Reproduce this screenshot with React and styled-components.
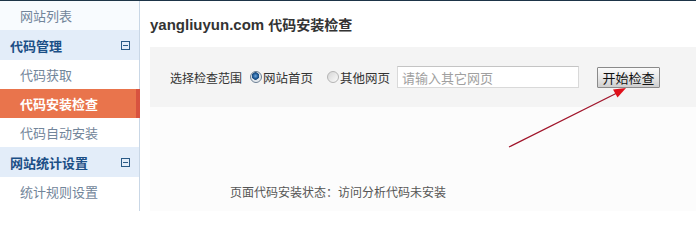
import React from "react";
import styled, { createGlobalStyle } from "styled-components";

const GlobalStyle = createGlobalStyle`
  html, body { margin: 0; padding: 0; background: #fff; }
  body { font-family: "Noto Sans CJK SC", "Liberation Sans", sans-serif; }
`;

const MENU = [
  { type: "item", label: "网站列表", first: true },
  { type: "head", label: "代码管理" },
  { type: "item", label: "代码获取" },
  { type: "item", label: "代码安装检查", active: true },
  { type: "item", label: "代码自动安装" },
  { type: "head", label: "网站统计设置" },
  { type: "item", label: "统计规则设置" },
];

const Page = styled.div`
  position: relative;
  width: 696px;
  height: 211px;
  overflow: hidden;
  border-top: 1px solid #1d3447;
  box-sizing: border-box;
  display: flex;
`;

const Sidebar = styled.div`
  width: 139px;
  flex-shrink: 0;
  border-right: 1px solid #c9d7e6;
  background: #fff;
  display: flex;
  flex-direction: column;
`;

const MenuItem = styled.div`
  height: 29px;
  display: flex;
  align-items: center;
  padding-left: 20px;
  font-size: 13px;
  font-weight: ${p => (p.active ? 700 : 400)};
  color: ${p => (p.active ? "#fff" : "#72859a")};
  background: ${p => (p.active ? "#e9744c" : p.first ? "#f8fbfe" : "#fff")};
  border-right: ${p => (p.active ? "4px solid #d8523f" : "none")};
  margin-right: ${p => (p.active ? "-1px" : "0")};
`;

const MenuHead = styled.div`
  height: 30px;
  display: flex;
  align-items: center;
  justify-content: space-between;
  padding: 0 9px 0 10px;
  font-size: 13px;
  font-weight: 700;
  color: #1b4f86;
  background: #e3edf9;
`;

const Collapse = styled.span`
  width: 7px;
  height: 7px;
  border: 1px solid #2a5a86;
  position: relative;
  &::after {
    content: "";
    position: absolute;
    left: 1px;
    right: 1px;
    top: 3px;
    height: 1px;
    background: #2a5a86;
  }
`;

const Main = styled.div`
  flex: 1;
  padding-left: 10px;
  display: flex;
  flex-direction: column;
`;

const Title = styled.div`
  height: 46px;
  display: flex;
  align-items: center;
  font-size: 14px;
  font-weight: 700;
  color: #333;
`;

const Domain = styled.span`
  font-family: "Liberation Sans", Arial, sans-serif;
  font-size: 15px;
  margin-right: 4px;
`;

const Panel = styled.div`
  height: 60px;
  background: #f4f4f4;
  display: flex;
  align-items: center;
  padding-left: 20px;
  font-size: 12px;
  color: #333;
`;

const Label = styled.span`
  margin-right: 8px;
`;

const RadioLabel = styled.label`
  display: flex;
  align-items: center;
  margin-right: ${p => p.gap}px;
  font-size: 12.5px;
`;

const RadioDot = styled.span`
  width: 10px;
  height: 10px;
  border-radius: 50%;
  border: 1px solid ${p => (p.checked ? "#6b7f93" : "#b4b4b4")};
  background: ${p =>
    p.checked
      ? "radial-gradient(circle at 45% 40%, #6fa6dc 0, #1f5a96 2.5px, #1f4f80 3.5px, #dfe4ea 4px, #f4f6f8 100%)"
      : "linear-gradient(135deg, #d6d6d6, #fbfbfb)"};
  margin-right: 1px;
`;

const UrlInput = styled.input`
  width: 182px;
  height: 22px;
  box-sizing: border-box;
  border: 1px solid #d9d9d9;
  border-top-color: #c4c4c4;
  padding: 0 4px;
  margin-left: 7px;
  font-family: "Noto Sans CJK SC", sans-serif;
  font-size: 13px;
  outline: none;
  &::placeholder { color: #a0a0a0; }
`;

const CheckButton = styled.button`
  width: 63px;
  height: 21px;
  margin-left: 18px;
  padding: 0;
  border: 1px solid #8a8a8a;
  border-radius: 1px;
  background: linear-gradient(#fbfbfb, #e6e6e6 55%, #cfcfcf);
  font-family: "Noto Sans CJK SC", sans-serif;
  font-size: 13px;
  color: #111;
  line-height: 19px;
`;

const Result = styled.div`
  flex: 1;
  background: #fcfcfc;
  padding: 78px 0 0 80px;
  font-size: 12px;
  line-height: 14px;
  color: #555;
`;

const Arrow = styled.svg`
  position: absolute;
  left: 0;
  top: -1px;
  pointer-events: none;
`;

export default function App() {
  return (
    <>
      <GlobalStyle />
      <Page>
        <Sidebar>
          {MENU.map(m =>
            m.type === "head" ? (
              <MenuHead key={m.label}>
                {m.label}
                <Collapse />
              </MenuHead>
            ) : (
              <MenuItem key={m.label} active={m.active} first={m.first}>
                {m.label}
              </MenuItem>
            )
          )}
        </Sidebar>
        <Main>
          <Title>
            <Domain>yangliuyun.com</Domain>代码安装检查
          </Title>
          <Panel>
            <Label>选择检查范围</Label>
            <RadioLabel gap={14}>
              <RadioDot checked />
              网站首页
            </RadioLabel>
            <RadioLabel gap={0}>
              <RadioDot />
              其他网页
            </RadioLabel>
            <UrlInput placeholder="请输入其它网页" />
            <CheckButton>开始检查</CheckButton>
          </Panel>
          <Result>页面代码安装状态：访问分析代码未安装</Result>
        </Main>
        <Arrow width="696" height="211" viewBox="0 0 696 211">
          <line x1="509" y1="147" x2="617" y2="93" stroke="#a0142a" strokeWidth="1.2" />
          <polygon points="626,88 617.5,97.5 613,89.5" fill="#e0101a" />
        </Arrow>
      </Page>
    </>
  );
}
